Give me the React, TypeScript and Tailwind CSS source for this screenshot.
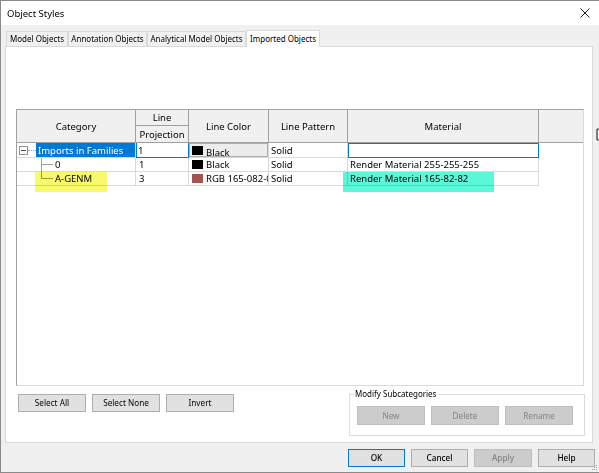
import React from "react";

function CloseIcon() {
  return (
    <svg width="10" height="10" viewBox="0 0 10 10" className="block">
      <path d="M0.5 0.5 L9.5 9.5 M9.5 0.5 L0.5 9.5" stroke="#1a1a1a" strokeWidth="1" />
    </svg>
  );
}

function Tab({ label, width, active }: { label: string; width: string; active?: boolean }) {
  return (
    <div
      className={
        active
          ? `${width} h-[17px] -mb-px relative z-10 bg-white border border-b-0 border-[#d9d9d9] flex items-center justify-center text-[8px] leading-[10px]`
          : `${width} h-[15px] bg-[#f0f0f0] border border-b-0 border-[#d9d9d9] flex items-center justify-center text-[8px] leading-[10px]`
      }
    >
      {label}
    </div>
  );
}

type BtnProps = {
  children: React.ReactNode;
  className: string;
  disabled?: boolean;
  primary?: boolean;
};

function Btn({ children, className, disabled, primary }: BtnProps) {
  const tone = disabled
    ? "bg-[#cccccc] border-[#bfbfbf] text-[#838383]"
    : primary
      ? "bg-[#e1e1e1] border-[#0078d7] text-black"
      : "bg-[#e1e1e1] border-[#adadad] text-black";
  return (
    <div className={`${className} ${tone} border flex items-center justify-center text-[8.2px] leading-[10px]`}>
      {children}
    </div>
  );
}

function Swatch({ color }: { color: string }) {
  return <span className={`${color} inline-block w-[11px] h-[9px] shrink-0`} />;
}

function ObjectTable() {
  return (
    <div className="relative w-[568px] h-[277px] ml-[10px] mt-[62px] border-t border-l border-[#a0a0a0] border-r border-b border-r-[#dadada] border-b-[#dadada] bg-white text-[9.5px] leading-[13px] flex flex-col">
      {/* header */}
      <div className="flex h-[33px] bg-[#f0f0f0] border-b border-[#a0a0a0] shrink-0">
        <div className="w-[119px] border-r border-[#a0a0a0] flex items-center justify-center">Category</div>
        <div className="w-[53px] border-r border-[#a0a0a0] flex flex-col">
          <div className="h-[16px] border-b border-[#a0a0a0] flex items-center justify-center">Line</div>
          <div className="flex-1 flex items-center justify-center">Projection</div>
        </div>
        <div className="w-[80px] border-r border-[#a0a0a0] flex items-center justify-center">Line Color</div>
        <div className="w-[79px] border-r border-[#a0a0a0] flex items-center justify-center">Line Pattern</div>
        <div className="w-[191px] border-r border-[#a0a0a0] flex items-center justify-center">Material</div>
        <div className="flex-1" />
      </div>

      {/* row 1 */}
      <div className="flex h-[15px] shrink-0">
        <div className="w-[119px] border-r border-b border-[#d9d9d9] flex items-center">
          <div className="w-[19px] flex items-center shrink-0">
            <span className="ml-[2px] w-[9px] h-[9px] border border-[#939393] bg-white flex items-center justify-center shrink-0">
              <span className="w-[5px] h-px bg-[#4a4a4a]" />
            </span>
            <span className="w-[8px] border-t border-dotted border-[#a0a0a0]" />
          </div>
          <div className="flex-1 h-full bg-[#0078d7] text-white pl-[2px] flex items-center whitespace-nowrap overflow-hidden">
            Imports in Families
          </div>
        </div>
        <div className="w-[53px] border-r border-b border-[#0078d7] shadow-[inset_1px_0_0_#0078d7] pl-[2px] flex items-center">1</div>
        <div className="w-[80px] border-r border-b border-[#d9d9d9] flex items-stretch">
          <div className="flex-1 bg-[#ececec] border border-[#adadad] flex items-center pl-[2px] gap-[3px] overflow-hidden">
            <Swatch color="bg-black" />
            <span className="underline translate-y-[2px]">Black</span>
          </div>
        </div>
        <div className="w-[79px] border-r border-b border-[#d9d9d9] pl-[2px] flex items-center">Solid</div>
        <div className="w-[191px] border border-[#0078d7] flex items-center" />
        <div className="flex-1" />
      </div>

      {/* row 2 */}
      <div className="flex h-[14px] shrink-0">
        <div className="relative w-[119px] border-r border-b border-[#d9d9d9] flex items-center">
          <span className="absolute left-[24px] top-0 h-[14px] border-l border-[#a0a0a0]" />
          <span className="absolute left-[24px] top-[6px] w-[12px] border-t border-[#a0a0a0]" />
          <span className="pl-[38px]">0</span>
        </div>
        <div className="w-[53px] border-r border-b border-[#d9d9d9] pl-[3px] flex items-center">1</div>
        <div className="w-[80px] border-r border-b border-[#d9d9d9] pl-[3px] gap-[3px] flex items-center">
          <Swatch color="bg-black" />
          <span>Black</span>
        </div>
        <div className="w-[79px] border-r border-b border-[#d9d9d9] pl-[2px] flex items-center">Solid</div>
        <div className="w-[191px] border-r border-b border-[#d9d9d9] pl-[2px] flex items-center whitespace-nowrap">
          Render Material 255-255-255
        </div>
        <div className="flex-1" />
      </div>

      {/* row 3 */}
      <div className="flex h-[14px] shrink-0">
        <div className="relative w-[119px] border-r border-b border-[#d9d9d9] flex items-center">
          <span className="absolute left-[24px] top-0 h-[7px] border-l border-[#a0a0a0]" />
          <span className="absolute left-[24px] top-[6px] w-[12px] border-t border-[#a0a0a0]" />
          <span className="pl-[38px]">A-GENM</span>
        </div>
        <div className="w-[53px] border-r border-b border-[#d9d9d9] pl-[3px] flex items-center">3</div>
        <div className="w-[80px] border-r border-b border-[#d9d9d9] pl-[3px] gap-[3px] flex items-center">
          <Swatch color="bg-[#a55252]" />
          <span className="min-w-0 overflow-hidden whitespace-nowrap">RGB 165-082-082</span>
        </div>
        <div className="w-[79px] border-r border-b border-[#d9d9d9] pl-[2px] flex items-center">Solid</div>
        <div className="w-[191px] border-r border-b border-[#d9d9d9] pl-[2px] flex items-center whitespace-nowrap">
          Render Material 165-82-82
        </div>
        <div className="flex-1" />
      </div>

      {/* highlighter marks */}
      <div className="absolute left-[18px] top-[62px] w-[72px] h-[20px] bg-[#f9f96c] mix-blend-multiply" />
      <div className="absolute left-[326px] top-[62px] w-[151px] h-[20px] bg-[#5af8d9] mix-blend-multiply" />
    </div>
  );
}

export default function App() {
  return (
    <div className="relative w-[599px] h-[473px] bg-[#f0f0f0] border-t border-l border-b border-[#8a8a8a] flex flex-col font-['Noto_Sans',sans-serif] text-black overflow-hidden">
      {/* title bar */}
      <div className="h-[24px] bg-white flex items-center justify-between pl-[6px] pr-[9px] shrink-0">
        <span className="text-[9.5px] pt-[2px]">Object Styles</span>
        <CloseIcon />
      </div>

      {/* tabs */}
      <div className="h-[21px] flex items-end pl-[5px] shrink-0">
        <Tab label="Model Objects" width="w-[62px]" />
        <Tab label="Annotation Objects" width="w-[79px]" />
        <Tab label="Analytical Model Objects" width="w-[99px]" />
        <Tab label="Imported Objects" width="w-[74px]" active />
      </div>

      {/* tab panel */}
      <div className="ml-[4px] w-[588px] h-[397px] bg-white border border-[#d9d9d9] flex flex-col shrink-0">
        <ObjectTable />

        <div className="flex items-start mt-[8px]">
          <div className="flex gap-[6px] ml-[12px]">
            <Btn className="w-[68px] h-[18px]">Select All</Btn>
            <Btn className="w-[68px] h-[18px]">Select None</Btn>
            <Btn className="w-[68px] h-[18px]">Invert</Btn>
          </div>

          <fieldset className="ml-auto mr-[7px] -mt-[5px] w-[236px] h-[47px] border border-[#dcdcdc] pl-[7px] pt-[7px]">
            <legend className="-ml-[3px] px-[1px] text-[8px] leading-[10px]">Modify Subcategories</legend>
            <div className="flex gap-[6px]">
              <Btn className="w-[68px] h-[19px]" disabled>New</Btn>
              <Btn className="w-[68px] h-[19px]" disabled>Delete</Btn>
              <Btn className="w-[68px] h-[19px]" disabled>Rename</Btn>
            </div>
          </fieldset>
        </div>
      </div>

      {/* dialog buttons */}
      <div className="flex justify-end gap-[6px] pr-[4px] mt-[6px]">
        <Btn className="w-[57px] h-[18px] font-medium" primary>OK</Btn>
        <Btn className="w-[57px] h-[18px] font-medium">Cancel</Btn>
        <Btn className="w-[58px] h-[18px] font-medium" disabled>Apply</Btn>
        <Btn className="w-[57px] h-[18px] font-medium">Help</Btn>
      </div>

      {/* mouse cursor peeking in at the right edge */}
      <svg className="absolute left-[595px] top-[127px]" width="4" height="13" viewBox="0 0 4 13">
        <path d="M1 1 H4 M1 1 V12 M1 12 H4" stroke="#333" strokeWidth="1.2" fill="none" />
      </svg>

      {/* resize grip */}
      <svg className="absolute right-[1px] bottom-[1px]" width="7" height="7" viewBox="0 0 7 7">
        <rect x="5" y="1" width="1" height="1" fill="#a0a0a0" />
        <rect x="3" y="3" width="1" height="1" fill="#a0a0a0" />
        <rect x="5" y="3" width="1" height="1" fill="#a0a0a0" />
        <rect x="1" y="5" width="1" height="1" fill="#a0a0a0" />
        <rect x="3" y="5" width="1" height="1" fill="#a0a0a0" />
        <rect x="5" y="5" width="1" height="1" fill="#a0a0a0" />
      </svg>
    </div>
  );
}
